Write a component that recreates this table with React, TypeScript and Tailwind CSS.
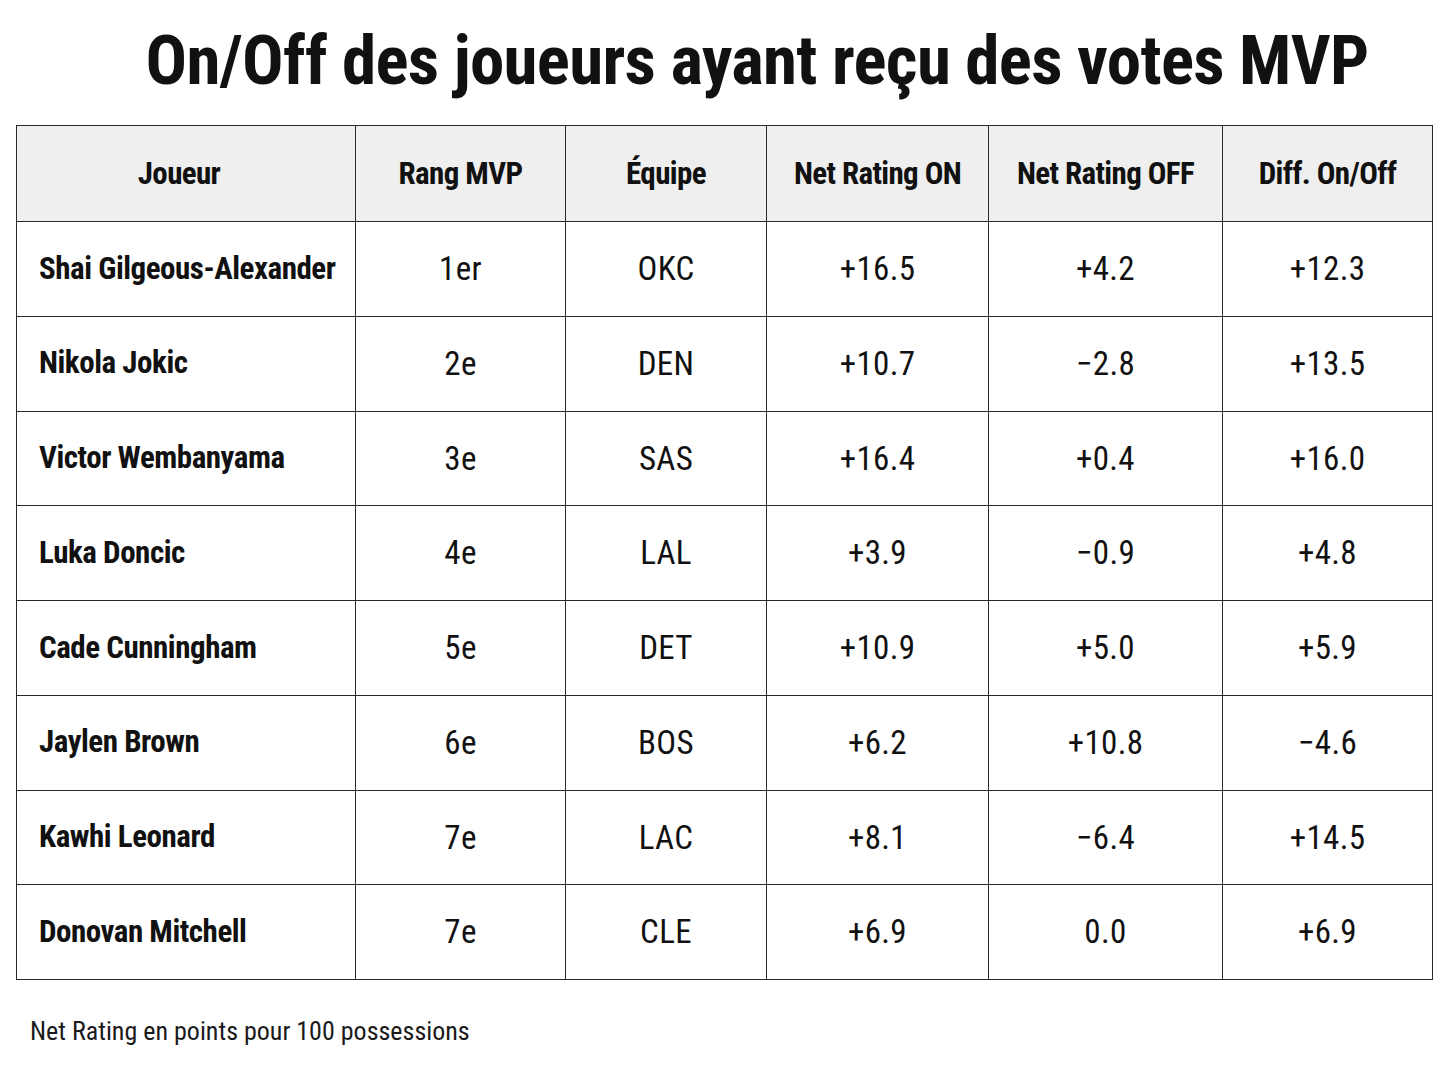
const font = { fontFamily: '"Roboto Condensed", Roboto, "Liberation Sans", sans-serif' }

const columns = [
  { label: 'Joueur', width: 'w-[339px] pr-[14px]' },
  { label: 'Rang MVP', width: 'w-[210px]' },
  { label: 'Équipe', width: 'w-[201px]' },
  { label: 'Net Rating ON', width: 'w-[222px]' },
  { label: 'Net Rating OFF', width: 'w-[234px]' },
  { label: 'Diff. On/Off', width: 'w-[210px]' },
]

// minus sign uses U+2212 so it is as wide as the plus
const rows = [
  ['Shai Gilgeous-Alexander', '1er', 'OKC', '+16.5', '+4.2', '+12.3'],
  ['Nikola Jokic', '2e', 'DEN', '+10.7', '−2.8', '+13.5'],
  ['Victor Wembanyama', '3e', 'SAS', '+16.4', '+0.4', '+16.0'],
  ['Luka Doncic', '4e', 'LAL', '+3.9', '−0.9', '+4.8'],
  ['Cade Cunningham', '5e', 'DET', '+10.9', '+5.0', '+5.9'],
  ['Jaylen Brown', '6e', 'BOS', '+6.2', '+10.8', '−4.6'],
  ['Kawhi Leonard', '7e', 'LAC', '+8.1', '−6.4', '+14.5'],
  ['Donovan Mitchell', '7e', 'CLE', '+6.9', '0.0', '+6.9'],
]

export default function App() {
  return (
    <div className="w-[1448px] h-[1086px] bg-white text-[#111]" style={font}>
      <div className="h-[125px] flex items-center justify-center pl-[66px] pb-[4px]">
        <h1 className="text-[69px] font-bold tracking-[-0.01em] leading-none">On/Off des joueurs ayant reçu des votes MVP</h1>
      </div>
      <div className="px-[16px]">
        <table className="w-[1416px] table-fixed border-collapse border-[1.5px] border-[#2a2a2a]">
          <thead>
            <tr className="h-[96px] bg-[#efefef]">
              {columns.map(c => (
                <th key={c.label} className={`${c.width} border-[1.5px] border-[#2a2a2a] text-center text-[31px] font-bold tracking-[-0.02em] pt-[1px]`}>
                  {c.label}
                </th>
              ))}
            </tr>
          </thead>
          <tbody>
            {rows.map((r, i) => (
              <tr key={i} className="h-[94.75px]">
                {r.map((v, j) => (
                  <td
                    key={j}
                    className={`border-[1.5px] border-[#2a2a2a] ${j === 0 ? 'text-left pl-[22px] font-bold text-[31px] tracking-[-0.015em]' : 'text-center text-[33px] tracking-[0.01em]'}`}
                  >
                    {v}
                  </td>
                ))}
              </tr>
            ))}
          </tbody>
        </table>
      </div>
      <p className="pl-[30px] pt-[32px] text-[26px] text-[#1a1a1a]">Net Rating en points pour 100 possessions</p>
    </div>
  )
}
